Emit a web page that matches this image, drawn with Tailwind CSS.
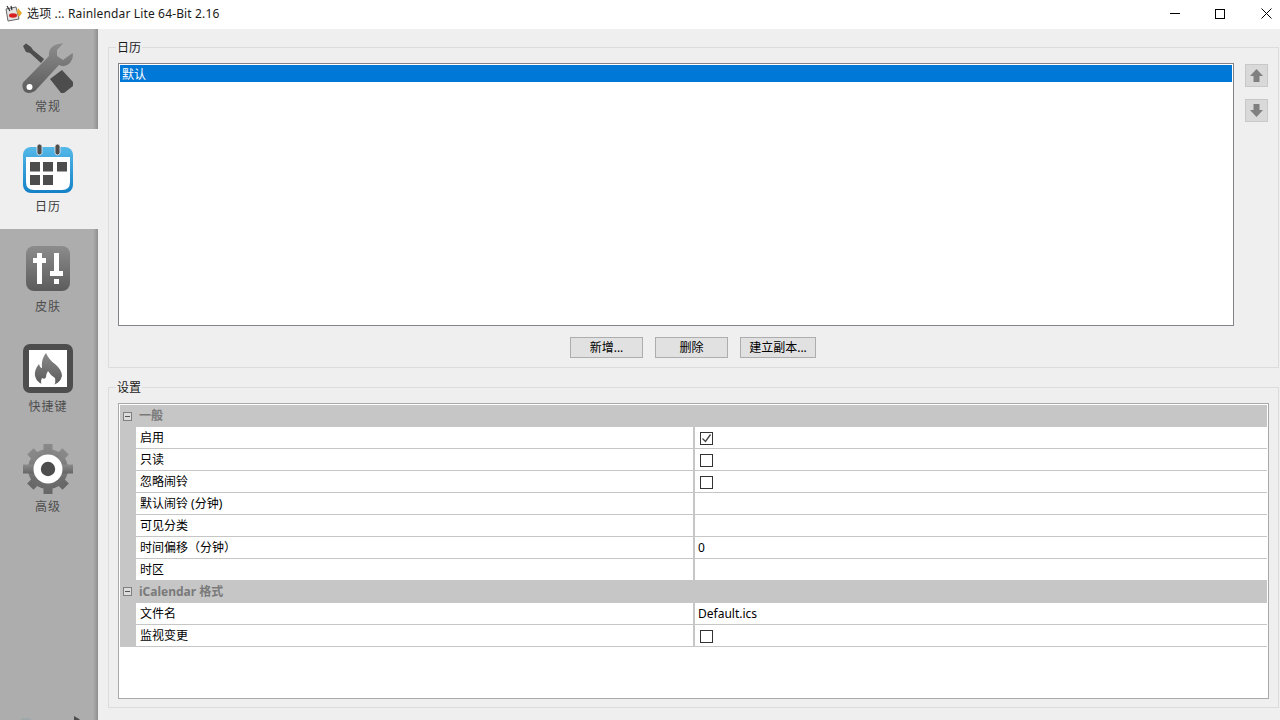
<!doctype html>
<html>
<head>
<meta charset="utf-8">
<script src="https://cdn.jsdelivr.net/npm/@tailwindcss/browser@4"></script>
</head>
<body class="w-[1280px] h-[720px] overflow-hidden bg-[#efefef] font-['Noto_Sans','Noto_Sans_CJK_SC',sans-serif] text-[12px] text-black">

<!-- title bar -->
<div class="h-[29px] bg-white flex items-center relative overflow-hidden">
  <svg class="ml-[5px] w-[18px] h-[18px] mb-[2px]" viewBox="0 0 18 18">
    <path d="M1 4 L11 2 L14 14 L3 16 Z" fill="#e4e4e4" stroke="#666" stroke-width="1"/>
    <path d="M2 1 L5 6 M6 1 L7 5" stroke="#333" stroke-width="1.200"/>
    <ellipse cx="8" cy="10.500" rx="4" ry="2.200" fill="#d81e1e"/>
    <path d="M13 3 L17 8 L14 12 L12 7 Z" fill="#e8a92c"/>
  </svg>
  <span class="ml-[4px] text-[12px] leading-[16px] mb-[2px] text-[#1a1a1a] tracking-[0.15px]">选项 .:. Rainlendar Lite 64-Bit 2.16</span>
  <div class="ml-auto mr-[-9px] flex h-full">
    <div class="w-[45px] h-full flex items-center justify-center pr-px"><div class="w-[10px] h-px bg-black mb-[2px]"></div></div>
    <div class="w-[45px] h-full flex items-center justify-center pr-px"><div class="w-[10px] h-[10px] border border-black mb-[2px]"></div></div>
    <div class="w-[46px] h-full flex items-center justify-center">
      <svg class="w-[11px] h-[11px] mb-[2px]" viewBox="0 0 11 11"><path d="M0.500 0.500 L10.500 10.500 M10.500 0.500 L0.500 10.500" stroke="#000" stroke-width="1" fill="none"/></svg>
    </div>
  </div>
</div>

<div class="flex h-[691px]">
  <!-- sidebar -->
  <aside class="w-[98px] shrink-0 bg-[#adadad] relative overflow-hidden text-[#4d4d4d] text-[12px]">
    <div class="absolute top-0 right-0 bottom-0 w-[5px] bg-gradient-to-r from-transparent to-[#8f8f8f]"></div>

    <div class="relative h-[100px] flex flex-col items-center pt-[14px] pr-[2px]">
      <svg class="w-[52px] h-[52px]" viewBox="0 0 52 52">
        <defs><linearGradient id="wr" x1="0" y1="0" x2="0" y2="1"><stop offset="0" stop-color="#8c8c8c"/><stop offset="1" stop-color="#5c5c5c"/></linearGradient></defs>
        <path d="M1 3 L4 0.500 L9 4 L11 7 L22 16 L19 20 L8 10 L4 9 Z" fill="#4d4d4d"/>
        <path d="M28 36 L40 27 L51 39 V43 L42 50 H39 Z" fill="#4d4d4d"/>
        <path d="M1.500 39 L27 13 Q26 6 32 2.500 Q37 0 41 0.500 L35 7 V13 L41 17 L50.500 10 Q52 15 48 20 Q43 25 37 22 L13 48 Q6 52 2 48 Q-1 43 1.500 39 Z" fill="url(#wr)"/>
        <circle cx="7.500" cy="44" r="3" fill="#fff"/>
      </svg>
      <span class="mt-[3px] text-[12px] tracking-[1px] leading-[18px]">常规</span>
    </div>

    <div class="relative h-[100px] bg-[#efefef] flex flex-col items-center pt-[14px] pr-[2px] text-[#3a3a3a]">
      <svg class="w-[52px] h-[52px]" viewBox="0 0 52 52">
        <defs><linearGradient id="cal" x1="0" y1="0" x2="0" y2="1"><stop offset="0" stop-color="#54b8e8"/><stop offset="1" stop-color="#1581c6"/></linearGradient></defs>
        <rect x="1" y="4" width="50" height="46" rx="8" fill="url(#cal)"/>
        <path d="M4 14 H48 V39 Q48 47 40 47 H12 Q4 47 4 39 Z" fill="#fff"/>
        <rect x="15" y="1" width="5" height="11" rx="2.500" fill="#4d4d4d" stroke="#efefef" stroke-width="0.800"/>
        <rect x="33" y="1" width="5" height="11" rx="2.500" fill="#4d4d4d" stroke="#efefef" stroke-width="0.800"/>
        <rect x="8" y="19" width="10" height="9.500" fill="#4d4d4d"/><rect x="21" y="19" width="10" height="9.500" fill="#4d4d4d"/><rect x="35" y="19" width="10" height="9.500" fill="#4d4d4d"/>
        <rect x="8" y="32" width="10" height="10" fill="#4d4d4d"/><rect x="21" y="32" width="10" height="10" fill="#4d4d4d"/>
      </svg>
      <span class="mt-[3px] tracking-[1px] leading-[18px]">日历</span>
    </div>

    <div class="relative h-[100px] flex flex-col items-center pt-[14px] pr-[2px]">
      <svg class="w-[52px] h-[52px]" viewBox="0 0 52 52">
        <defs><linearGradient id="sk" x1="0" y1="0" x2="0" y2="1"><stop offset="0" stop-color="#8c8c8c"/><stop offset="1" stop-color="#5c5c5c"/></linearGradient></defs>
        <rect x="4" y="3" width="44" height="45" rx="8" fill="url(#sk)"/>
        <rect x="15" y="10" width="5" height="31" fill="#fff"/><rect x="11" y="15" width="13" height="5" fill="#fff"/>
        <rect x="32" y="10" width="5" height="18" fill="#fff"/><rect x="28" y="28" width="13" height="5" fill="#fff"/><rect x="32" y="36" width="5" height="5" fill="#fff"/>
      </svg>
      <span class="mt-[3px] tracking-[1px] leading-[18px]">皮肤</span>
    </div>

    <div class="relative h-[100px] flex flex-col items-center pt-[14px] pr-[2px]">
      <svg class="w-[52px] h-[52px]" viewBox="0 0 52 52">
        <defs><linearGradient id="fl" x1="0" y1="0" x2="0" y2="1"><stop offset="0" stop-color="#8a8a8a"/><stop offset="1" stop-color="#5a5a5a"/></linearGradient></defs>
        <rect x="1" y="1" width="50" height="49" rx="7" fill="#4d4d4d"/>
        <rect x="7" y="7" width="38" height="37" fill="#fff"/>
        <path d="M24 10 Q27 17 33 21 Q40 27 40 33 Q38 42 27 42 Q15 42 13 33 Q12 27 17 21 Q18 25 20 25 Q19 16 24 10 Z" fill="url(#fl)"/>
        <path d="M26 28 Q29 33 33 35 Q34 40 32 42 H20 Q18 39 20 35 Q23 37 24 34 Q24 31 26 28 Z" fill="#fff"/>
      </svg>
      <span class="mt-[3px] tracking-[1px] leading-[18px]">快捷键</span>
    </div>

    <div class="relative h-[100px] flex flex-col items-center pt-[14px] pr-[2px]">
      <svg class="w-[52px] h-[52px]" viewBox="0 0 52 52">
        <defs><linearGradient id="ge" x1="0" y1="0" x2="0" y2="1"><stop offset="0" stop-color="#8a8a8a"/><stop offset="1" stop-color="#666"/></linearGradient></defs>
        <g fill="url(#ge)">
          <circle cx="26" cy="26" r="20"/>
          <rect x="21.500" y="1" width="9" height="50"/>
          <rect x="1" y="21.500" width="50" height="9"/>
          <rect x="21.500" y="1" width="9" height="50" transform="rotate(45 26 26)"/>
          <rect x="21.500" y="1" width="9" height="50" transform="rotate(-45 26 26)"/>
        </g>
        <circle cx="26" cy="26" r="14.500" fill="#fff"/>
        <circle cx="26" cy="26" r="7.200" fill="#4d4d4d"/>
      </svg>
      <span class="mt-[3px] tracking-[1px] leading-[18px]">高级</span>
    </div>

    <div class="absolute left-[74px] top-[687px] w-[6px] h-[6px] bg-[#4d4d4d] [clip-path:polygon(0_0,100%_60%,0_100%)]"></div>
    <div class="absolute left-[20px] top-[689px] w-[12px] h-[4px] rounded-t-full bg-[#9fa8aa]"></div>
  </aside>

  <!-- main -->
  <main class="flex-1 pl-[10px] pr-px pt-[18px]">
    <!-- calendars group -->
    <section class="relative h-[321px] border border-[#dcdcdc] pt-[15px] pl-[9px] pr-[10px]">
      <span class="absolute left-[7px] top-[-8px] bg-[#efefef] px-px leading-[16px] text-[#1a1a1a]">日历</span>
      <div class="flex">
        <div class="w-[1116px] h-[263px] border border-[#82828c] bg-white p-px">
          <div class="h-[17px] bg-[#0078d7] text-white leading-[19px] pl-[2px]">默认</div>
        </div>
        <div class="ml-[11px] flex flex-col gap-[12px] mt-px">
          <div class="w-[23px] h-[23px] bg-[#d9d9d9] border border-[#c8c8c8] flex items-center justify-center">
            <svg class="w-[15px] h-[15px]" viewBox="0 0 15 15"><path d="M7.500 1 L14 8 H10.500 V14 H4.500 V8 H1 Z" fill="#808080"/></svg>
          </div>
          <div class="w-[23px] h-[23px] bg-[#d9d9d9] border border-[#c8c8c8] flex items-center justify-center">
            <svg class="w-[15px] h-[15px]" viewBox="0 0 15 15"><path d="M7.500 14 L14 7 H10.500 V1 H4.500 V7 H1 Z" fill="#808080"/></svg>
          </div>
        </div>
      </div>
      <div class="flex mt-[11px] ml-[452px]">
        <button class="w-[73px] h-[21px] bg-[#e1e1e1] border border-[#adadad] leading-[19px]">新增...</button>
        <button class="ml-[12px] w-[73px] h-[21px] bg-[#e1e1e1] border border-[#adadad] leading-[19px]">删除</button>
        <button class="ml-[12px] w-[76px] h-[21px] bg-[#e1e1e1] border border-[#adadad] leading-[19px]">建立副本...</button>
      </div>
    </section>

    <!-- settings group -->
    <section class="relative mt-[19px] h-[321px] border border-[#dcdcdc] pt-[15px] pl-[9px] pr-[9px]">
      <span class="absolute left-[7px] top-[-8px] bg-[#efefef] px-px leading-[16px] text-[#1a1a1a]">设置</span>
      <div class="h-[296px] border border-[#a9a9a9] bg-white p-px">
        <div class="h-[22px] bg-[#c6c6c6] flex items-center text-[#7a7a7a] font-bold">
          <span class="w-[16px] flex justify-center pr-px"><span class="w-[9px] h-[9px] border border-[#808080] bg-[#dcdcdc] flex items-center justify-center"><span class="w-[5px] h-px bg-[#555]"></span></span></span>
          <span class="pl-[3px]">一般</span>
        </div>
        <div class="h-[22px] flex"><div class="w-[16px] bg-[#c6c6c6]"></div><div class="w-[559px] border-b border-r-2 border-[#c6c6c6] pl-[4px] leading-[21px]">启用</div><div class="flex-1 border-b border-[#c6c6c6] flex items-center pl-[5px] pt-[2px]">
          <span class="w-[13px] h-[13px] border border-[#333] flex items-center justify-center"><svg class="w-[11px] h-[11px]" viewBox="0 0 11 11"><path d="M1.500 5.500 L4.500 8.500 L9.500 1.500" stroke="#444" stroke-width="1.300" fill="none"/></svg></span>
        </div></div>
        <div class="h-[22px] flex"><div class="w-[16px] bg-[#c6c6c6]"></div><div class="w-[559px] border-b border-r-2 border-[#c6c6c6] pl-[4px] leading-[21px]">只读</div><div class="flex-1 border-b border-[#c6c6c6] flex items-center pl-[5px] pt-[2px]"><span class="w-[13px] h-[13px] border border-[#333]"></span></div></div>
        <div class="h-[22px] flex"><div class="w-[16px] bg-[#c6c6c6]"></div><div class="w-[559px] border-b border-r-2 border-[#c6c6c6] pl-[4px] leading-[21px]">忽略闹铃</div><div class="flex-1 border-b border-[#c6c6c6] flex items-center pl-[5px] pt-[2px]"><span class="w-[13px] h-[13px] border border-[#333]"></span></div></div>
        <div class="h-[22px] flex"><div class="w-[16px] bg-[#c6c6c6]"></div><div class="w-[559px] border-b border-r-2 border-[#c6c6c6] pl-[4px] leading-[21px]">默认闹铃 (分钟)</div><div class="flex-1 border-b border-[#c6c6c6]"></div></div>
        <div class="h-[22px] flex"><div class="w-[16px] bg-[#c6c6c6]"></div><div class="w-[559px] border-b border-r-2 border-[#c6c6c6] pl-[4px] leading-[21px]">可见分类</div><div class="flex-1 border-b border-[#c6c6c6]"></div></div>
        <div class="h-[22px] flex"><div class="w-[16px] bg-[#c6c6c6]"></div><div class="w-[559px] border-b border-r-2 border-[#c6c6c6] pl-[4px] leading-[21px]">时间偏移（分钟）</div><div class="flex-1 border-b border-[#c6c6c6] pl-[3px] leading-[21px]">0</div></div>
        <div class="h-[21px] flex"><div class="w-[16px] bg-[#c6c6c6]"></div><div class="w-[559px] border-r-2 border-[#c6c6c6] pl-[4px] leading-[21px]">时区</div><div class="flex-1"></div></div>
        <div class="h-[23px] bg-[#c6c6c6] flex items-center text-[#7a7a7a] font-bold">
          <span class="w-[16px] flex justify-center pr-px"><span class="w-[9px] h-[9px] border border-[#808080] bg-[#dcdcdc] flex items-center justify-center"><span class="w-[5px] h-px bg-[#555]"></span></span></span>
          <span class="pl-[3px]">iCalendar 格式</span>
        </div>
        <div class="h-[22px] flex"><div class="w-[16px] bg-[#c6c6c6]"></div><div class="w-[559px] border-b border-r-2 border-[#c6c6c6] pl-[4px] leading-[21px]">文件名</div><div class="flex-1 border-b border-[#c6c6c6] pl-[3px] leading-[21px]">Default.ics</div></div>
        <div class="h-[22px] flex"><div class="w-[16px] bg-[#c6c6c6]"></div><div class="w-[559px] border-b border-r-2 border-[#c6c6c6] pl-[4px] leading-[21px]">监视变更</div><div class="flex-1 border-b border-[#c6c6c6] flex items-center pl-[5px] pt-[2px]"><span class="w-[13px] h-[13px] border border-[#333]"></span></div></div>
      </div>
    </section>
  </main>
</div>
</body>
</html>
